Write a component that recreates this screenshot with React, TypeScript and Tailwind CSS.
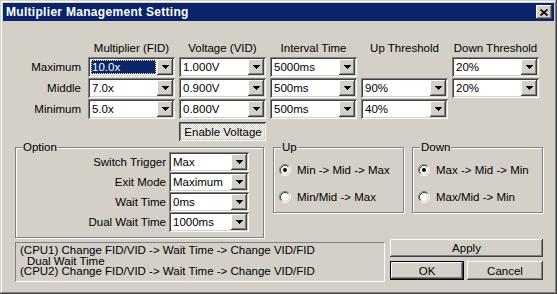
import React from "react";

// win2000 classic bevels
const raised = "shadow-[inset_-1px_-1px_#404040,inset_1px_1px_#ffffff,inset_-2px_-2px_#808080,inset_2px_2px_#d4d0c8]";
const sunken = "shadow-[inset_1px_1px_#808080,inset_-1px_-1px_#ffffff,inset_2px_2px_#404040,inset_-2px_-2px_#d4d0c8]";
const pressed = "shadow-[inset_1px_1px_#404040,inset_-1px_-1px_#ffffff,inset_2px_2px_#808080,inset_-2px_-2px_#d4d0c8]";
const frame = "shadow-[inset_-1px_-1px_#404040,inset_1px_1px_#d4d0c8,inset_-2px_-2px_#808080,inset_2px_2px_#ffffff]";
const etched = "relative border border-[#808080] shadow-[1px_1px_0_#ffffff,inset_1px_1px_0_#ffffff]";

function Arrow() {
  return (
    <svg width="7" height="4" viewBox="0 0 7 4" shapeRendering="crispEdges">
      <rect x="0" y="0" width="7" height="1" fill="#000" />
      <rect x="1" y="1" width="5" height="1" fill="#000" />
      <rect x="2" y="2" width="3" height="1" fill="#000" />
      <rect x="3" y="3" width="1" height="1" fill="#000" />
    </svg>
  );
}

function Combo({ value, focused }: { value: string; focused?: boolean }) {
  return (
    <div className={`flex h-[20px] bg-white p-[2px] ${sunken}`}>
      <div className="flex min-w-0 flex-1 items-center">
        {focused ? (
          <span className="m-[1px] flex h-[14px] flex-1 items-center bg-[#0a246a] pl-[1px] text-white outline-1 -outline-offset-1 outline-dotted outline-[#e8d890]">
            {value}
          </span>
        ) : (
          <span className="pl-[2px]">{value}</span>
        )}
      </div>
      <div className={`flex w-[16px] items-center justify-center bg-[#d4d0c8] ${raised}`}>
        <Arrow />
      </div>
    </div>
  );
}

function Radio({ checked, label }: { checked?: boolean; label: string }) {
  return (
    <div className="flex h-[14px] items-center gap-[6px]">
      <svg width="12" height="12" viewBox="0 0 12 12">
        <circle cx="6" cy="6" r="4.5" fill="#fff" />
        <path d="M2.11 9.89A5.5 5.5 0 0 1 9.89 2.11" stroke="#808080" fill="none" />
        <path d="M9.89 2.11A5.5 5.5 0 0 1 2.11 9.89" stroke="#ffffff" fill="none" />
        <path d="M2.82 9.18A4.5 4.5 0 0 1 9.18 2.82" stroke="#404040" fill="none" />
        <path d="M9.18 2.82A4.5 4.5 0 0 1 2.82 9.18" stroke="#d4d0c8" fill="none" />
        {checked && <circle cx="6" cy="6" r="2" fill="#000" />}
      </svg>
      <span>{label}</span>
    </div>
  );
}

const rows = [
  { label: "Maximum", cells: ["10.0x", "1.000V", "5000ms", "", "20%"] },
  { label: "Middle", cells: ["7.0x", "0.900V", "500ms", "90%", "20%"] },
  { label: "Minimum", cells: ["5.0x", "0.800V", "500ms", "40%", ""] },
];

const options = [
  ["Switch Trigger", "Max"],
  ["Exit Mode", "Maximum"],
  ["Wait Time", "0ms"],
  ["Dual Wait Time", "1000ms"],
];

export default function App() {
  return (
    <div
      className={`h-[294px] w-[557px] bg-[#d4d0c8] p-[3px] text-[11.5px] leading-[14px] text-black font-['Liberation_Sans',Arial,sans-serif] ${frame}`}
    >
      {/* title bar */}
      <div className="flex h-[18px] items-center justify-between bg-[#0a246a] pl-[3px] pr-[2px]">
        <span className="text-[12px] font-bold tracking-[0.3px] text-white">Multiplier Management Setting</span>
        <div className={`flex h-[14px] w-[16px] items-center justify-center bg-[#d4d0c8] ${raised}`}>
          <svg width="8" height="7" viewBox="0 0 8 7">
            <path d="M0.5 0.5L7.5 6.5M7.5 0.5L0.5 6.5" stroke="#000" strokeWidth="1.6" />
          </svg>
        </div>
      </div>

      {/* multiplier table */}
      <div className="mt-[20px] grid grid-cols-[81px_87px_87px_87px_87px_87px] gap-x-[4px] gap-y-[1px]">
        <div className="h-[15px]" />
        <div className="text-center">Multiplier (FID)</div>
        <div className="text-center">Voltage (VID)</div>
        <div className="text-center">Interval Time</div>
        <div className="text-center">Up Threshold</div>
        <div className="text-center">Down Threshold</div>
        {rows.map((r, i) => (
          <React.Fragment key={r.label}>
            <div className="flex h-[20px] items-center justify-end pr-[3px]">{r.label}</div>
            {r.cells.map((c, j) =>
              c ? <Combo key={j} value={c} focused={i === 0 && j === 0} /> : <div key={j} />
            )}
          </React.Fragment>
        ))}
        <div />
        <div />
        <div
          className={`mt-[2px] flex h-[19px] items-center justify-center pl-[1px] pt-[1px] bg-[repeating-conic-gradient(#ffffff_0%_25%,#d4d0c8_0%_50%)] bg-[length:2px_2px] ${pressed}`}
        >
          Enable Voltage
        </div>
      </div>

      {/* groups */}
      <div className="ml-[12px] mt-[6px] flex items-start">
        <div className={`h-[91px] w-[249px] ${etched}`}>
          <span className="absolute -top-[7px] left-[6px] bg-[#d4d0c8] px-[1px] leading-[13px]">Option</span>
          <div className="grid grid-cols-[150px_80px] gap-x-[3px] pt-[4px]">
            {options.map(([l, v]) => (
              <React.Fragment key={l}>
                <div className="flex h-[20px] items-center justify-end">{l}</div>
                <Combo value={v} />
              </React.Fragment>
            ))}
          </div>
        </div>
        <div className={`ml-[9px] h-[66px] w-[131px] ${etched}`}>
          <span className="absolute -top-[7px] left-[7px] bg-[#d4d0c8] px-[1px] leading-[13px]">Up</span>
          <div className="flex flex-col gap-[13px] pl-[5px] pt-[15px]">
            <Radio checked label="Min -> Mid -> Max" />
            <Radio label="Min/Mid -> Max" />
          </div>
        </div>
        <div className={`ml-[8px] h-[66px] w-[131px] ${etched}`}>
          <span className="absolute -top-[7px] left-[7px] bg-[#d4d0c8] px-[1px] leading-[13px]">Down</span>
          <div className="flex flex-col gap-[13px] pl-[5px] pt-[15px]">
            <Radio checked label="Max -> Mid -> Min" />
            <Radio label="Max/Mid -> Min" />
          </div>
        </div>
      </div>

      {/* notes + buttons */}
      <div className="ml-[12px] mt-[1px] flex items-start">
        <div className="mt-[3px] h-[40px] w-[370px] border border-b-white border-l-[#808080] border-r-white border-t-[#808080] pl-[4px] pt-[2px] leading-[10.5px]">
          <div>(CPU1) Change FID/VID -&gt; Wait Time -&gt; Change VID/FID</div>
          <div className="pl-[7px]">Dual Wait Time</div>
          <div>(CPU2) Change FID/VID -&gt; Wait Time -&gt; Change VID/FID</div>
        </div>
        <div className="ml-[5px] flex w-[153px] flex-col gap-[4px]">
          <div className={`flex h-[18px] items-center justify-center bg-[#d4d0c8] ${raised}`}>Apply</div>
          <div className="flex gap-[3px]">
            <div className="h-[19px] w-[74px] border border-black">
              <div className={`flex h-full items-center justify-center bg-[#d4d0c8] ${raised}`}>OK</div>
            </div>
            <div className={`flex h-[19px] w-[76px] items-center justify-center bg-[#d4d0c8] ${raised}`}>Cancel</div>
          </div>
        </div>
      </div>
    </div>
  );
}
